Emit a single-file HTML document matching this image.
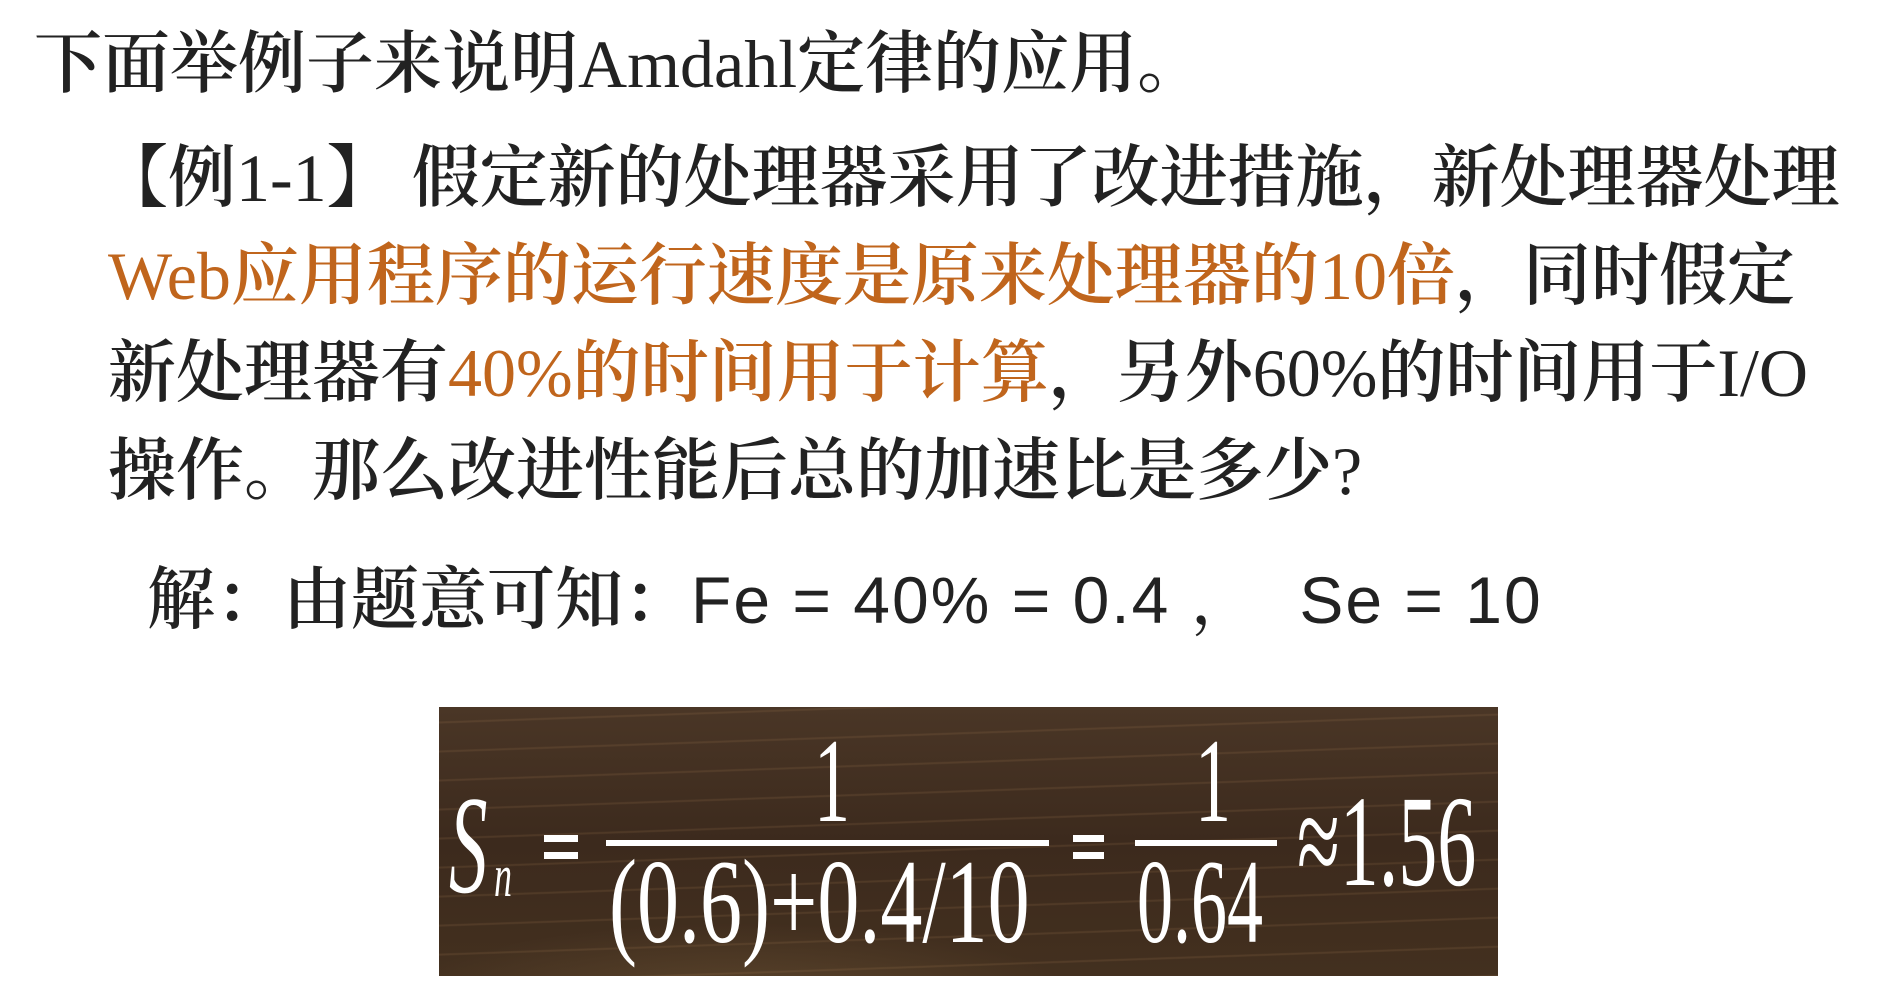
<!DOCTYPE html>
<html><head><meta charset="utf-8"><style>
html,body{margin:0;padding:0;background:#fff;width:1902px;height:982px;overflow:hidden;position:relative}
.t{position:absolute;white-space:nowrap;font-family:"Liberation Serif","Noto Serif CJK SC",serif;font-size:68px;line-height:80px;color:#222;font-weight:600}
.l{font-weight:400}
.o{color:#c0651c}
.s{font-family:"Liberation Sans","Noto Serif CJK SC",sans-serif;font-weight:400;font-size:66px;letter-spacing:2px}
#box{position:absolute;left:439px;top:707px;width:1059px;height:269px;overflow:hidden;
background:
repeating-linear-gradient(178deg,rgba(255,255,255,0) 0 14px,rgba(160,120,80,.18) 15px 16px,rgba(255,255,255,0) 17px 29px),
radial-gradient(ellipse 500px 120px at 300px 300px,rgba(140,110,70,.35),rgba(0,0,0,0) 70%),
linear-gradient(180deg,#4a3626,#3c2a1d 50%,#43301f);}
.m{position:absolute;color:#fff;font-family:"Liberation Serif",serif;white-space:nowrap;transform-origin:0 0}
.bar{position:absolute;background:#fff;height:6px}
</style></head><body>
<div class="t" style="left:34px;top:24px">下面举例子来说明<span class="l">Amdahl</span>定律的应用。</div>
<div class="t" style="left:100px;top:138px">【例<span class="l">1-1</span>】 假定新的处理器采用了改进措施，新处理器处理</div>
<div class="t" style="left:108px;top:236px"><span class="o"><span class="l">Web</span>应用程序的运行速度是原来处理器的<span class="l">10</span>倍</span>，同时假定</div>
<div class="t" style="left:108px;top:333px">新处理器有<span class="o"><span class="l">40%</span>的时间用于计算</span>，另外<span class="l">60%</span>的时间用于<span class="l">I/O</span></div>
<div class="t" style="left:108px;top:431px">操作。那么改进性能后总的加速比是多少<span class="l">?</span></div>
<div class="t" style="left:147px;top:560px">解：由题意可知：<span class="s">Fe = 40% = 0.4 ，&nbsp; Se = 10</span></div>
<div id="box">
 <div class="m" style="left:10px;top:58px;font-size:140px;font-style:italic;transform:scaleX(.55)">S</div>
 <div class="m" style="left:55px;top:135px;font-size:60px;font-style:italic;transform:scaleX(.6)">n</div>
 <div class="bar" style="left:105px;top:128px;width:34px;height:7px"></div>
 <div class="bar" style="left:105px;top:145px;width:34px;height:7px"></div>
 <div class="bar" style="left:167px;top:133px;width:443px"></div>
 <div class="m" style="left:375px;top:5px;font-size:120px;transform:scaleX(.6)">1</div>
 <div class="m" style="left:170px;top:126px;font-size:120px;transform:scaleX(.7)">(0.6)+0.4/10</div>
 <div class="bar" style="left:634px;top:128px;width:31px;height:7px"></div>
 <div class="bar" style="left:634px;top:145px;width:31px;height:7px"></div>
 <div class="bar" style="left:696px;top:133px;width:142px"></div>
 <div class="m" style="left:756px;top:5px;font-size:120px;transform:scaleX(.6)">1</div>
 <div class="m" style="left:698px;top:126px;font-size:120px;transform:scaleX(.6)">0.64</div>
 <div class="m" style="left:858px;top:60px;font-size:130px;transform:scaleX(.6)">≈1.56</div>
</div>
</body></html>
